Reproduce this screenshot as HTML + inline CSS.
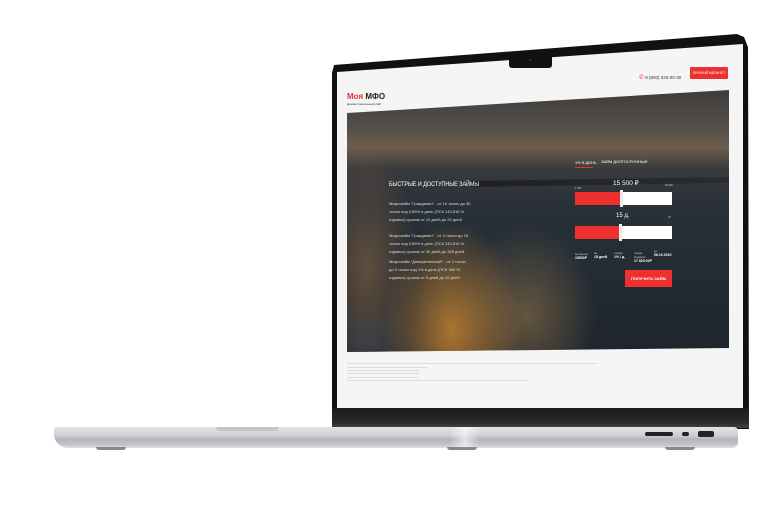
<!DOCTYPE html>
<html><head><meta charset="utf-8"><style>
body{margin:0;width:780px;height:526px;background:#fff;position:relative;overflow:hidden;font-family:"Liberation Sans",sans-serif}
.a{position:absolute}
.t{position:absolute;color:#fff;white-space:nowrap}
</style></head><body>
<!-- lid -->
<div class="a" style="left:332px;top:33px;width:417px;height:396px;background:#111;clip-path:polygon(2px 32px,405px 1px,412px 4px,416px 14px,417px 396px,0 396px,0 40px);"></div>
<div class="a" style="left:337px;top:44px;width:406px;height:364px;background:#f5f5f5;clip-path:polygon(0 28px,406px 0,406px 364px,0 364px);"></div>
<div class="a" style="left:509px;top:54px;width:43px;height:14px;background:#111;border-radius:0 0 3px 3px"></div>
<div class="a" style="left:529px;top:59px;width:2px;height:2px;background:#335;border-radius:50%"></div>
<!-- hinge -->
<div class="a" style="left:332px;top:408px;width:417px;height:20px;background:linear-gradient(#1b1b1b,#2a2a2a 70%,#444)"></div>
<!-- header -->
<div class="t" style="left:347px;top:92px;font-size:8px;font-weight:bold;color:#e83030">Моя <span style="color:#222">МФО</span></div>
<div class="t" style="left:347px;top:102px;font-size:3px;color:#333">Демонстрационный сайт</div>
<div class="t" style="left:639px;top:74px;font-size:4.5px;color:#333"><span style="color:#e83030;font-size:6px">✆</span> 8 (800) 333-00-30</div>
<div class="a" style="left:690px;top:67px;width:38px;height:12px;background:#f03030;border-radius:1px;color:#fff;font-size:3.5px;text-align:center;line-height:12px">ЛИЧНЫЙ КАБИНЕТ</div>
<!-- photo -->
<div class="a" style="left:347px;top:90px;width:382px;height:262px;clip-path:polygon(0 23px,382px 0,382px 258px,0 262px);background:
radial-gradient(ellipse 70px 110px at 105px 240px,rgba(230,150,50,.7),transparent),
radial-gradient(ellipse 70px 90px at 180px 225px,rgba(180,140,80,.45),transparent),
radial-gradient(ellipse 50px 120px at 20px 180px,rgba(170,120,70,.45),transparent),
radial-gradient(ellipse 60px 40px at 20px 250px,rgba(40,55,75,.8),transparent),
linear-gradient(180deg,#3e3c3c 0%,#55504a 15%,#6d5e4c 22%,#3a3a3e 30%,#283038 45%,#242c35 65%,#1f252d 100%)"></div>
<div class="a" style="left:470px;top:177px;width:259px;height:10px;background:linear-gradient(90deg,#1a1a1a,#2a2a2a);opacity:.8;clip-path:polygon(0 40%,100% 0,100% 60%,0 100%)"></div>
<!-- left text -->
<div class="t" style="left:389px;top:182px;font-size:6px;transform:scaleX(.9);transform-origin:left">БЫСТРЫЕ И ДОСТУПНЫЕ ЗАЙМЫ</div>
<div class="t" style="left:389px;top:200px;font-size:4px;line-height:8px;white-space:normal;width:82px;color:#ddd">Микрозайм "Гражданин" - от 10 тысяч до 30 тысяч под 0,65% в день (ПСК 140,816 % годовых) сроком от 10 дней до 20 дней</div>
<div class="t" style="left:389px;top:232px;font-size:4px;line-height:8px;white-space:normal;width:82px;color:#ddd">Микрозайм "Гражданин" - от 3 тысяч до 15 тысяч под 0,65% в день (ПСК 140,816 % годовых) сроком от 30 дней до 365 дней</div>
<div class="t" style="left:389px;top:258px;font-size:4px;line-height:8px;white-space:normal;width:82px;color:#ddd">Микрозайм "Доверительный" - от 2 тысяч до 5 тысяч под 1% в день (ПСК 365 % годовых) сроком от 5 дней до 20 дней</div>
<!-- calculator -->
<div class="t" style="left:575px;top:160px;font-size:4px">1% В ДЕНЬ</div>
<div class="a" style="left:575px;top:167px;width:18px;height:1px;background:#f03030"></div>
<div class="t" style="left:601px;top:159px;font-size:4px">ЗАЙМ ДОЛГОСРОЧНЫЙ</div>
<div class="t" style="left:613px;top:179px;font-size:6.5px">15 500 ₽</div>
<div class="t" style="left:575px;top:187px;font-size:2.5px;color:#ccc">1 000</div>
<div class="t" style="left:665px;top:184px;font-size:2.5px;color:#ccc">30 000</div>
<div class="a" style="left:575px;top:192px;width:97px;height:13px;background:linear-gradient(90deg,#f03030 48%,#fff 48%)"></div>
<div class="a" style="left:620px;top:190px;width:3px;height:17px;background:#eee"></div>
<div class="t" style="left:616px;top:213px;font-size:6px">15 д.</div>
<div class="t" style="left:668px;top:216px;font-size:2.5px;color:#ccc">30</div>
<div class="a" style="left:575px;top:226px;width:97px;height:13px;background:linear-gradient(90deg,#f03030 46%,#fff 46%)"></div>
<div class="a" style="left:619px;top:224px;width:3px;height:17px;background:#eee"></div>
<div class="t" style="left:575px;top:252px;font-size:2.8px;color:#ccc">вы берете<br><b style="font-size:3.5px;color:#fff">15500Р</b></div>
<div class="t" style="left:594px;top:251px;font-size:2.8px;color:#ccc">на<br><b style="font-size:3.5px;color:#fff">15 дней</b></div>
<div class="t" style="left:614px;top:251px;font-size:2.8px;color:#ccc">ставка<br><b style="font-size:3.5px;color:#fff">1% / д.</b></div>
<div class="t" style="left:634px;top:251px;font-size:2.8px;color:#ccc">сумма<br>возврата<br><b style="font-size:3.5px;color:#fff">17 825.00Р</b></div>
<div class="t" style="left:654px;top:249px;font-size:2.8px;color:#ccc">до<br><b style="font-size:3.5px;color:#fff">06.10.2022</b></div>
<div class="a" style="left:625px;top:270px;width:47px;height:17px;background:#f03030;color:#fff;font-size:4px;font-weight:bold;text-align:center;line-height:17px">ПОЛУЧИТЬ ЗАЙМ</div>
<!-- footer text -->
<div class="a" style="left:347px;top:363px;width:250px;height:1px;background:#ddd"></div>
<div class="a" style="left:347px;top:367px;width:80px;height:1px;background:#ddd"></div>
<div class="a" style="left:347px;top:370px;width:72px;height:1px;background:#ddd"></div>
<div class="a" style="left:347px;top:373px;width:72px;height:1px;background:#ddd"></div>
<div class="a" style="left:347px;top:377px;width:72px;height:1px;background:#ddd"></div>
<div class="a" style="left:347px;top:380px;width:180px;height:1px;background:#ddd"></div>
<!-- base -->
<div class="a" style="left:54px;top:427px;width:684px;height:21px;border-radius:2px 4px 6px 14px;background:linear-gradient(#e4e4e8,#d2d3d8 35%,#b4b5ba 60%,#c4c5ca 85%,#e0e0e2)"></div>
<div class="a" style="left:216px;top:427px;width:63px;height:4px;background:#c4c5ca;border-radius:0 0 6px 6px"></div>
<div class="a" style="left:96px;top:447px;width:30px;height:3px;background:#888;border-radius:0 0 4px 4px"></div>
<div class="a" style="left:447px;top:447px;width:30px;height:3px;background:#888;border-radius:0 0 4px 4px"></div>
<div class="a" style="left:665px;top:447px;width:30px;height:3px;background:#888;border-radius:0 0 4px 4px"></div>
<div class="a" style="left:645px;top:432px;width:28px;height:4px;background:#222;border-radius:2px"></div>
<div class="a" style="left:682px;top:432px;width:7px;height:4px;background:#222;border-radius:2px"></div>
<div class="a" style="left:698px;top:431px;width:16px;height:6px;background:#222;border-radius:2px"></div>
<div class="a" style="left:450px;top:427px;width:30px;height:20px;background:linear-gradient(90deg,rgba(255,255,255,0),rgba(255,255,255,.6),rgba(255,255,255,0))"></div>
</body></html>
